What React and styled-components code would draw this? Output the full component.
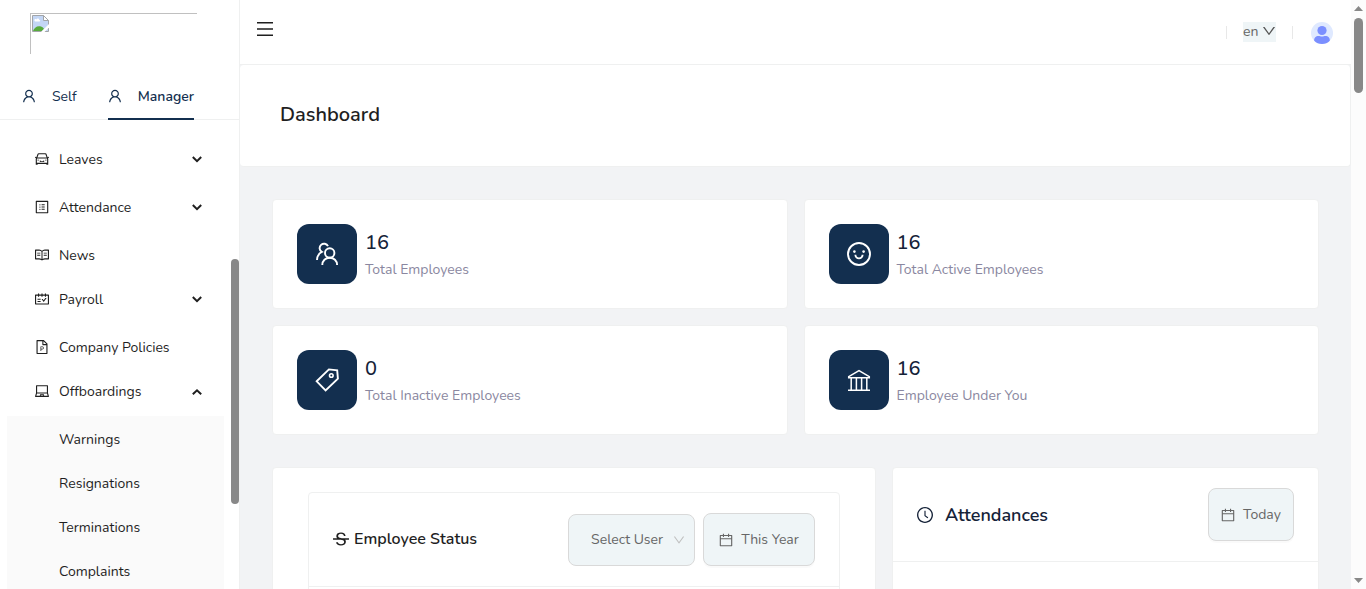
import React from "react";
import styled, { createGlobalStyle } from "styled-components";
import {
  AiOutlineUser,
  AiOutlineCar,
  AiOutlineProfile,
  AiOutlineRead,
  AiOutlineSchedule,
  AiOutlineFilePpt,
  AiOutlineLaptop,
  AiOutlineStrikethrough,
  AiOutlineClockCircle,
  AiOutlineCalendar,
  AiOutlineDown,
} from "react-icons/ai";

const navy = "#132f4f";
const line = "#eff0f0";
const soft = "#eff5f7";
const iconBox = "64 64 896 896";

const GlobalStyle = createGlobalStyle`
  *, *::before, *::after { box-sizing: border-box; }
  body {
    margin: 0;
    background: #f2f3f5;
    color: #1f1f1f;
    font: 14px/22px Nunito, Lato, "Open Sans", sans-serif;
  }
  h1, h2, p, ul { margin: 0; padding: 0; }
  ul { list-style: none; }
  a { color: inherit; text-decoration: none; }
  button, select { font: inherit; color: inherit; cursor: pointer; }
  svg { display: block; flex: none; }
`;

const Shell = styled.div`
  display: grid;
  grid-template-columns: 240px minmax(0, 1fr) 15px;
  height: 100vh;
  overflow: hidden;
`;

const Sidebar = styled.aside`
  position: relative;
  background: #fff;
  border-right: 1px solid ${line};
  overflow: hidden;
`;

const Logo = styled.div`
  width: 167px;
  height: 41px;
  margin: 13px 0 0 30px;
  padding: 1px;
  border: solid #c0c0c0;
  border-width: 1px 0 0 1px;
`;

const Tabs = styled.div`
  display: flex;
  gap: 31px;
  height: 48px;
  margin-top: 18px;
  margin-bottom: 17px;
  padding: 0 22px;
  border-bottom: 1px solid ${line};
`;

const Tab = styled.button`
  display: flex;
  align-items: center;
  gap: 16px;
  height: 48px;
  padding: 0 0 1px;
  border: 0;
  background: none;
  color: ${navy};
  font-weight: ${(p) => (p.$active ? 600 : 400)};
  box-shadow: ${(p) => (p.$active ? `inset 0 -2px ${navy}` : "none")};
`;

const TabText = styled.span`
  padding-top: 2px;
`;

const MenuLink = styled.a`
  display: flex;
  align-items: center;
  gap: 10px;
  height: 44px;
  margin-bottom: ${(p) => (p.$group ? "4px" : 0)};
  padding: 0 37px 0 35px;
`;

const MenuText = styled.span`
  flex: 1;
  padding-top: 2px;
`;

const SubMenu = styled.ul`
  margin: -1px 15px 0 7px;
  padding-top: 1px;
  background: #fafafa;
`;

const SubLink = styled.a`
  display: flex;
  align-items: center;
  height: 44px;
  padding: 2px 0 0 52px;
`;

const SidebarThumb = styled.div`
  position: absolute;
  right: 0;
  top: 259px;
  width: 8px;
  height: 245px;
  border-radius: 4px;
  background: #888;
`;

const Page = styled.div`
  min-width: 0;
  overflow: hidden;
`;

const TopBar = styled.header`
  display: flex;
  align-items: center;
  justify-content: space-between;
  height: 65px;
  padding: 0 18px 0 17px;
  background: #fff;
  border-bottom: 1px solid ${line};
`;

const MenuButton = styled.button`
  display: flex;
  margin-bottom: 6px;
  padding: 0;
  border: 0;
  background: none;
`;

const TopTools = styled.div`
  display: flex;
  align-items: center;
  gap: 16px;
`;

const Divider = styled.span`
  width: 1px;
  height: 13px;
  background: #e8e8e8;
`;

const SelectWrap = styled.label`
  position: relative;
  display: block;
  color: #666;

  svg {
    position: absolute;
    right: ${(p) => (p.$large ? "10px" : "0")};
    top: ${(p) => (p.$large ? "20px" : "2px")};
    color: ${(p) => (p.$large ? "#bfbfbf" : "#555")};
    pointer-events: none;
  }
`;

const SelectBox = styled.select`
  display: block;
  appearance: none;
  width: ${(p) => (p.$large ? "127px" : "33px")};
  height: ${(p) => (p.$large ? "52px" : "20px")};
  padding: ${(p) => (p.$large ? "0 30px 0 22px" : "0 0 2px")};
  border: ${(p) => (p.$large ? "1px solid #d9d9d9" : "0")};
  border-radius: ${(p) => (p.$large ? "8px" : "0")};
  background: ${soft};
  line-height: 19px;
`;

const AvatarButton = styled.button`
  padding: 2px 0 0;
  border: 0;
  margin-left: 2px;
  background: none;
`;

const PageHeader = styled.div`
  display: flex;
  align-items: center;
  height: 102px;
  padding: 0 40px 2px;
  background: #fff;
  border: solid ${line};
  border-width: 0 1px 1px 0;
  border-radius: 4px;
`;

const PageTitle = styled.h1`
  font-size: 20px;
  line-height: 28px;
  font-weight: 600;
`;

const Content = styled.main`
  display: grid;
  gap: 32px;
  padding: 32px;
`;

const Stats = styled.section`
  display: grid;
  grid-template-columns: 1fr 1fr;
  gap: 16px;
`;

const Card = styled.section`
  background: #fff;
  border: 1px solid ${line};
  border-radius: 4px;
`;

const StatCard = styled(Card)`
  display: flex;
  align-items: center;
  gap: 8px;
  height: 110px;
  padding: 0 24px;
`;

const StatIcon = styled.div`
  display: grid;
  place-items: center;
  width: 60px;
  height: 60px;
  border-radius: 12px;
  background: ${navy};
  color: #fff;
`;

const StatText = styled.div`
  padding-top: 2px;
`;

const StatValue = styled.p`
  font-size: 20px;
  line-height: 28px;
  font-weight: 500;
  color: #152238;
  margin-bottom: 2px;
`;

const StatLabel = styled.p`
  color: #8a87a0;
`;

const Panels = styled.div`
  display: grid;
  grid-template-columns: repeat(24, minmax(0, 1fr));
  column-gap: 16px;
`;

const StatusPanel = styled(Card)`
  grid-column: span 14;
  height: 480px;
  padding: 24px 35px;
`;

const AttendancePanel = styled(Card)`
  grid-column: span 10;
  height: 480px;
`;

const InnerCard = styled(Card)`
  height: 420px;
`;

const PanelHead = styled.div`
  display: flex;
  align-items: center;
  justify-content: space-between;
  height: 94px;
  padding: 0 24px;
  border-bottom: 1px solid ${line};
`;

const PanelTitle = styled.h2`
  display: flex;
  align-items: center;
  gap: ${(p) => (p.$large ? "12px" : "5px")};
  padding-bottom: ${(p) => (p.$large ? 0 : "2px")};
  white-space: nowrap;
  font-size: ${(p) => (p.$large ? "18px" : "16px")};
  line-height: 24px;
  font-weight: 600;
  color: ${(p) => (p.$large ? "#152238" : "#1f1f1f")};
`;

const Controls = styled.div`
  display: flex;
  align-items: center;
  gap: 8px;
`;

const DateButton = styled.button`
  display: flex;
  align-items: center;
  justify-content: center;
  gap: 8px;
  width: ${(p) => (p.$wide ? "112px" : "86px")};
  height: 53px;
  padding: 0;
  border: 1px solid #d9d9d9;
  border-radius: 8px;
  background: ${soft};
  color: #666;
  box-shadow: 0 2px 0 rgba(0, 0, 0, 0.02);
`;

const ScrollTrack = styled.div`
  display: flex;
  flex-direction: column;
  align-items: center;
  justify-content: space-between;
  padding: 6px 0;
  background: #fcfcfc;
`;

const ScrollThumb = styled.div`
  width: 9px;
  height: 75px;
  margin-top: 7px;
  margin-bottom: auto;
  border-radius: 5px;
  background: #888;
`;

function Arrow({ down }) {
  return (
    <svg width="9" height="5" viewBox="0 0 9 5" fill="#888" aria-hidden="true">
      <path d={down ? "M0 0h9L4.5 5z" : "M0 5h9L4.5 0z"} />
    </svg>
  );
}

function Chevron({ open }) {
  return (
    <svg width="10" height="10" viewBox="0 0 10 10" fill="none" stroke="currentColor" strokeWidth="2" aria-hidden="true">
      <path d={open ? "M.8 8.3 5 4.3l4.2 4" : "M.8 3 5 7.2 9.2 3"} />
    </svg>
  );
}

function MissingImage() {
  return (
    <svg width="17" height="17" viewBox="0 0 17 17" role="img" aria-label="Company logo">
      <path d="M.5.5h11l5 5v11H.5z" fill="#c3d6f5" stroke="#a2a5a8" />
      <path d="M2.5 6c-.6-1.8 1-2.4 1.8-1.6C5 2.8 7.4 3.3 7.3 5c1.3 0 1.3 1.5 0 1.5h-4c-.5 0-.7-.2-.8-.5z" fill="#fff" />
      <path d="M1 16c1-3.5 4.5-5.8 8-4.5 1.500.5 2.500 1.500 3 2.500L10 16z" fill="#58ab3c" />
      <path d="m9 17 8-8v3.5L12.5 17z" fill="#fff" />
      <path d="M11.5.5v5h5z" fill="#fff" stroke="#a2a5a8" />
    </svg>
  );
}

const glyph = {
  width: 24,
  height: 24,
  viewBox: "0 0 24 24",
  fill: "none",
  stroke: "currentColor",
  strokeWidth: 1.9,
  "aria-hidden": true,
};

const PeopleGlyph = () => (
  <svg {...glyph}>
    <path d="M13 4.2A4.4 4.4 0 1 0 6.8 9.900C4 11.3 2.2 14 2 18" />
    <circle cx="14.7" cy="11" r="4.7" />
    <path d="M7.3 23c0-4.3 3.2-7.3 7.4-7.3s7.4 3 7.4 7.3" />
  </svg>
);

const SmileGlyph = () => (
  <svg {...glyph}>
    <circle cx="12" cy="12" r="11" />
    <path d="M8.4 12.8a3.6 3.6 0 0 0 7.2 0" />
    <circle cx="7.4" cy="9.6" r="1.3" fill="currentColor" stroke="none" />
    <circle cx="16.6" cy="9.6" r="1.3" fill="currentColor" stroke="none" />
  </svg>
);

const TagGlyph = () => (
  <svg {...glyph}>
    <path d="M1.7 13.3 13.9 1.4l8.3.9.7 8.3-12.3 11.8z" />
    <circle cx="16.3" cy="7.5" r="1.8" strokeWidth="1.6" />
  </svg>
);

const BankGlyph = () => (
  <svg {...glyph} strokeWidth="1.5">
    <path d="M1.7 9.7v-1L12 2.6l10.3 6.1v1zM1 22.2h22M4.2 10v12M9.4 10v12M14.6 10v12M19.8 10v12" />
  </svg>
);

const menu = [
  { label: "Leaves", Icon: AiOutlineCar, group: true },
  { label: "Attendance", Icon: AiOutlineProfile, group: true },
  { label: "News", Icon: AiOutlineRead },
  { label: "Payroll", Icon: AiOutlineSchedule, group: true },
  { label: "Company Policies", Icon: AiOutlineFilePpt },
  {
    label: "Offboardings",
    Icon: AiOutlineLaptop,
    group: true,
    children: ["Warnings", "Resignations", "Terminations", "Complaints"],
  },
];

const stats = [
  { value: 16, label: "Total Employees", Icon: PeopleGlyph },
  { value: 16, label: "Total Active Employees", Icon: SmileGlyph },
  { value: 0, label: "Total Inactive Employees", Icon: TagGlyph },
  { value: 16, label: "Employee Under You", Icon: BankGlyph },
];

export default function App() {
  return (
    <>
      <GlobalStyle />
      <Shell>
        <Sidebar>
          <Logo>
            <MissingImage />
          </Logo>
          <Tabs role="tablist">
            <Tab role="tab" aria-selected="false">
              <AiOutlineUser size={14} viewBox={iconBox} />
              <TabText>Self</TabText>
            </Tab>
            <Tab role="tab" aria-selected="true" $active>
              <AiOutlineUser size={14} viewBox={iconBox} />
              <TabText>Manager</TabText>
            </Tab>
          </Tabs>
          <nav>
            <ul>
              {menu.map(({ label, Icon, group, children }) => (
                <li key={label}>
                  <MenuLink href="#" $group={group}>
                    <Icon size={14} viewBox={iconBox} />
                    <MenuText>{label}</MenuText>
                    {group && <Chevron open={Boolean(children)} />}
                  </MenuLink>
                  {children && (
                    <SubMenu>
                      {children.map((item) => (
                        <li key={item}>
                          <SubLink href="#">{item}</SubLink>
                        </li>
                      ))}
                    </SubMenu>
                  )}
                </li>
              ))}
            </ul>
          </nav>
          <SidebarThumb />
        </Sidebar>

        <Page>
          <TopBar>
            <MenuButton aria-label="Toggle menu">
              <svg width="16" height="14" viewBox="0 0 16 14" fill="#1f1f1f" aria-hidden="true">
                <path d="M0 0h16v1.5H0zM0 6.2h16v1.5H0zM0 12.5h16V14H0z" />
              </svg>
            </MenuButton>
            <TopTools>
              <Divider />
              <SelectWrap>
                <SelectBox aria-label="Language" defaultValue="en">
                  <option value="en">en</option>
                </SelectBox>
                <AiOutlineDown size={14} viewBox={iconBox} />
              </SelectWrap>
              <Divider />
              <AvatarButton aria-label="Account">
                <svg width="22" height="22" viewBox="0 0 22 22" aria-hidden="true">
                  <circle cx="11" cy="11" r="11" fill="#dfe9ff" />
                  <circle cx="11" cy="8.5" r="4.6" fill="#7b8fff" />
                  <path d="M3.2 18.7C2.9 15.8 5 14 7.4 14c1.5 0 2.1.6 3.6.6s2.1-.6 3.6-.6c2.4 0 4.5 1.8 4.2 4.7A11 11 0 0 1 11 22a11 11 0 0 1-7.8-3.3z" fill="#7b8fff" />
                </svg>
              </AvatarButton>
            </TopTools>
          </TopBar>
          <PageHeader>
            <PageTitle>Dashboard</PageTitle>
          </PageHeader>
          <Content>
            <Stats>
              {stats.map(({ value, label, Icon }) => (
                <StatCard key={label}>
                  <StatIcon>
                    <Icon />
                  </StatIcon>
                  <StatText>
                    <StatValue>{value}</StatValue>
                    <StatLabel>{label}</StatLabel>
                  </StatText>
                </StatCard>
              ))}
            </Stats>
            <Panels>
              <StatusPanel>
                <InnerCard>
                  <PanelHead>
                    <PanelTitle>
                      <AiOutlineStrikethrough size={16} viewBox={iconBox} />
                      Employee Status
                    </PanelTitle>
                    <Controls>
                      <SelectWrap $large>
                        <SelectBox $large aria-label="Select User">
                          <option>Select User</option>
                        </SelectBox>
                        <AiOutlineDown size={12} viewBox={iconBox} />
                      </SelectWrap>
                      <DateButton $wide>
                        <AiOutlineCalendar size={14} viewBox={iconBox} />
                        This Year
                      </DateButton>
                    </Controls>
                  </PanelHead>
                </InnerCard>
              </StatusPanel>
              <AttendancePanel>
                <PanelHead>
                  <PanelTitle $large>
                    <AiOutlineClockCircle size={16} viewBox={iconBox} />
                    Attendances
                  </PanelTitle>
                  <DateButton>
                    <AiOutlineCalendar size={14} viewBox={iconBox} />
                    Today
                  </DateButton>
                </PanelHead>
              </AttendancePanel>
            </Panels>
          </Content>
        </Page>

        <ScrollTrack>
          <Arrow />
          <ScrollThumb />
          <Arrow down />
        </ScrollTrack>
      </Shell>
    </>
  );
}
